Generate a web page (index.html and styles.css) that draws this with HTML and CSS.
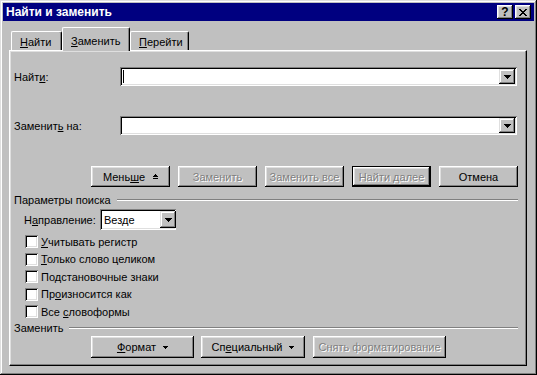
FILE: index.html
```html
<!DOCTYPE html>
<html lang="ru">
<head>
    <meta charset="UTF-8">
    <title>Найти и заменить</title>
    <link rel="stylesheet" href="styles.css">
</head>
<body>
    <div class="window">
        <div class="titlebar">
            <span class="title">Найти и заменить</span>
            <div class="title-buttons">
                <span class="tbtn">?</span>
                <span class="tbtn">
                    <svg width="8" height="7" viewBox="0 0 8 7" shape-rendering="crispEdges"><path d="M0 0h2v1h-2zM6 0h2v1h-2zM1 1h2v1h-2zM5 1h2v1h-2zM2 2h4v1h-4zM3 3h2v1h-2zM2 4h4v1h-4zM1 5h2v1h-2zM5 5h2v1h-2zM0 6h2v1h-2zM6 6h2v1h-2z" fill="#000"/></svg>
                </span>
            </div>
        </div>

        <div class="content">
            <div class="tabs">
                <div class="tab tab-find"><u>Н</u>айти</div>
                <div class="tab tab-replace active"><u>З</u>аменить</div>
                <div class="tab tab-goto"><u>П</u>ерейти</div>
            </div>

            <div class="panel">
                <div class="field">
                    <span class="field-label">Найт<u>и</u>:</span>
                    <div class="combo">
                        <span class="caret"></span>
                        <span class="drop"><svg width="7" height="4" viewBox="0 0 7 4" shape-rendering="crispEdges"><path d="M0 0h7v1h-7zM1 1h5v1h-5zM2 2h3v1h-3zM3 3h1v1h-1z" fill="#000"/></svg></span>
                    </div>
                </div>
                <div class="field">
                    <span class="field-label">Заменит<u>ь</u> на:</span>
                    <div class="combo">
                        <span class="drop"><svg width="7" height="4" viewBox="0 0 7 4" shape-rendering="crispEdges"><path d="M0 0h7v1h-7zM1 1h5v1h-5zM2 2h3v1h-3zM3 3h1v1h-1z" fill="#000"/></svg></span>
                    </div>
                </div>

                <div class="btn-row">
                    <div class="btn">
                        <span>Мень<u>ш</u>е</span>
                        <svg width="5" height="5" viewBox="0 0 5 5" shape-rendering="crispEdges"><path d="M2 0h1v1h-1zM1 1h3v1h-3zM0 2h5v1h-5zM0 4h5v1h-5z" fill="#000"/></svg>
                    </div>
                    <div class="btn disabled">Заменить</div>
                    <div class="btn disabled">Заменить все</div>
                    <div class="btn disabled default">Найти далее</div>
                    <div class="btn">Отмена</div>
                </div>

                <div class="group">Параметры поиска</div>

                <div class="direction">
                    <span class="direction-label">Н<u>а</u>правление:</span>
                    <div class="select">
                        <span>Везде</span>
                        <span class="drop"><svg width="7" height="4" viewBox="0 0 7 4" shape-rendering="crispEdges"><path d="M0 0h7v1h-7zM1 1h5v1h-5zM2 2h3v1h-3zM3 3h1v1h-1z" fill="#000"/></svg></span>
                    </div>
                </div>

                <div class="checks">
                    <div class="check"><span class="box"></span><span><u>У</u>читывать регистр</span></div>
                    <div class="check"><span class="box"></span><span><u>Т</u>олько слово целиком</span></div>
                    <div class="check"><span class="box"></span><span>По<u>д</u>становочные знаки</span></div>
                    <div class="check"><span class="box"></span><span>Пр<u>о</u>износится как</span></div>
                    <div class="check"><span class="box"></span><span>Все <u>с</u>ловоформы</span></div>
                </div>

                <div class="group group-replace">Заменить</div>

                <div class="btn-row bottom">
                    <div class="btn btn-format">
                        <span><u>Ф</u>ормат</span>
                        <svg width="5" height="3" viewBox="0 0 5 3" shape-rendering="crispEdges"><path d="M0 0h5v1h-5zM1 1h3v1h-3zM2 2h1v1h-1z" fill="#000"/></svg>
                    </div>
                    <div class="btn btn-special">
                        <span>Сп<u>е</u>циальный</span>
                        <svg width="5" height="3" viewBox="0 0 5 3" shape-rendering="crispEdges"><path d="M0 0h5v1h-5zM1 1h3v1h-3zM2 2h1v1h-1z" fill="#000"/></svg>
                    </div>
                    <div class="btn btn-clear disabled">Снять форматирование</div>
                </div>
            </div>
        </div>
    </div>
</body>
</html>
```

FILE: styles.css
```css
body {
    margin: 0;
    background: #c0c0c0;
    font-family: "Liberation Sans", Arial, sans-serif;
    font-size: 11px;
    color: #000;
}

.window {
    width: 537px;
    height: 375px;
    box-sizing: border-box;
    padding: 3px;
    background: #c0c0c0;
    box-shadow: inset -1px -1px #000, inset 1px 1px #dfdfdf, inset -2px -2px #808080, inset 2px 2px #fff;
}

.titlebar {
    height: 18px;
    background: #000080;
    color: #fff;
    display: flex;
    align-items: center;
    justify-content: space-between;
    padding: 0 3px;
}

.title {
    font-weight: bold;
    font-size: 12px;
}

.title-buttons {
    display: flex;
    gap: 2px;
}

.tbtn {
    width: 16px;
    height: 14px;
    box-sizing: border-box;
    background: #c0c0c0;
    color: #000;
    font-weight: bold;
    font-size: 12px;
    display: flex;
    align-items: center;
    justify-content: center;
    box-shadow: inset -1px -1px #000, inset 1px 1px #fff, inset -2px -2px #808080, inset 2px 2px #dfdfdf;
}

/* Tabs */
.content {
    padding: 6px 0 0 6px;
}

.tabs {
    display: flex;
    align-items: flex-end;
    height: 23px;
    margin-left: 2px;
}

.tab {
    height: 19px;
    box-sizing: border-box;
    padding: 4px 0 0 8px;
    line-height: 13px;
    border-top: 1px solid #fff;
    border-left: 1px solid #fff;
    border-right: 1px solid #000;
    border-radius: 2px 2px 0 0;
    box-shadow: inset -1px 0 #808080;
    background: #c0c0c0;
}

.tab-find { width: 51px; }
.tab-replace { width: 68px; }
.tab-goto { width: 59px; }

.tab.active {
    height: 24px;
    margin-bottom: -1px;
    padding-top: 7px;
    position: relative;
    z-index: 1;
}

.panel {
    width: 518px;
    height: 316px;
    box-sizing: border-box;
    padding: 16px 8px 0 4px;
    border: 1px solid;
    border-color: #fff #000 #000 #fff;
    box-shadow: inset -1px -1px #808080, inset 1px 1px #dfdfdf;
}

/* Fields */
.field {
    display: flex;
    align-items: center;
    height: 19px;
}

.field + .field {
    margin-top: 30px;
}

.field-label {
    width: 106px;
}

.combo, .select {
    height: 19px;
    box-sizing: border-box;
    padding: 2px;
    background: #fff;
    display: flex;
    align-items: center;
    box-shadow: inset 1px 1px #808080, inset -1px -1px #fff, inset 2px 2px #000, inset -2px -2px #dfdfdf;
}

.combo {
    width: 397px;
}

.caret {
    width: 1px;
    height: 13px;
    background: #000;
    margin-left: 1px;
}

.drop {
    width: 16px;
    height: 100%;
    margin-left: auto;
    background: #c0c0c0;
    display: flex;
    align-items: center;
    justify-content: center;
    box-shadow: inset -1px -1px #000, inset 1px 1px #dfdfdf, inset -2px -2px #808080, inset 2px 2px #fff;
}

/* Buttons */
.btn-row {
    display: flex;
    gap: 8px;
    margin: 31px 0 0 77px;
}

.btn {
    width: 79px;
    height: 21px;
    box-sizing: border-box;
    display: flex;
    align-items: center;
    justify-content: center;
    gap: 8px;
    background: #c0c0c0;
    box-shadow: inset -1px -1px #000, inset 1px 1px #fff, inset -2px -2px #808080, inset 2px 2px #dfdfdf;
}

.btn.disabled {
    color: #808080;
    text-shadow: 1px 1px #fff;
}

.btn.default {
    border: 1px solid #000;
    box-shadow: inset -1px -1px #000, inset 1px 1px #fff, inset -2px -2px #808080, inset 2px 2px #dfdfdf;
}

.btn-row.bottom {
    gap: 7px;
    margin-top: 2px;
}

.btn-row.bottom .btn {
    height: 22px;
}

.btn-format { width: 103px !important; gap: 7px; }
.btn-special { width: 104px !important; gap: 7px; }
.btn-clear { width: 133px !important; margin-left: 1px; }

/* Groups */
.group {
    display: flex;
    align-items: center;
    height: 13px;
    margin-top: 6px;
}

.group::after {
    content: "";
    flex: 1;
    border-top: 1px solid #808080;
    border-bottom: 1px solid #fff;
    margin-left: 6px;
}

.group-replace {
    margin-top: 3px;
}

.direction {
    display: flex;
    align-items: center;
    height: 21px;
    margin: 3px 0 0 10px;
}

.direction-label {
    width: 76px;
}

.select {
    width: 76px;
    height: 21px;
    padding-left: 4px;
}

.select .drop {
    height: 17px;
    margin-right: -2px;
}

.checks {
    display: flex;
    flex-direction: column;
    gap: 4.5px;
    margin: 5px 0 0 11px;
}

.check {
    display: flex;
    align-items: center;
    gap: 3px;
    height: 13px;
}

.box {
    width: 13px;
    height: 13px;
    box-sizing: border-box;
    background: #fff;
    box-shadow: inset 1px 1px #808080, inset -1px -1px #fff, inset 2px 2px #000, inset -2px -2px #dfdfdf;
}
```
